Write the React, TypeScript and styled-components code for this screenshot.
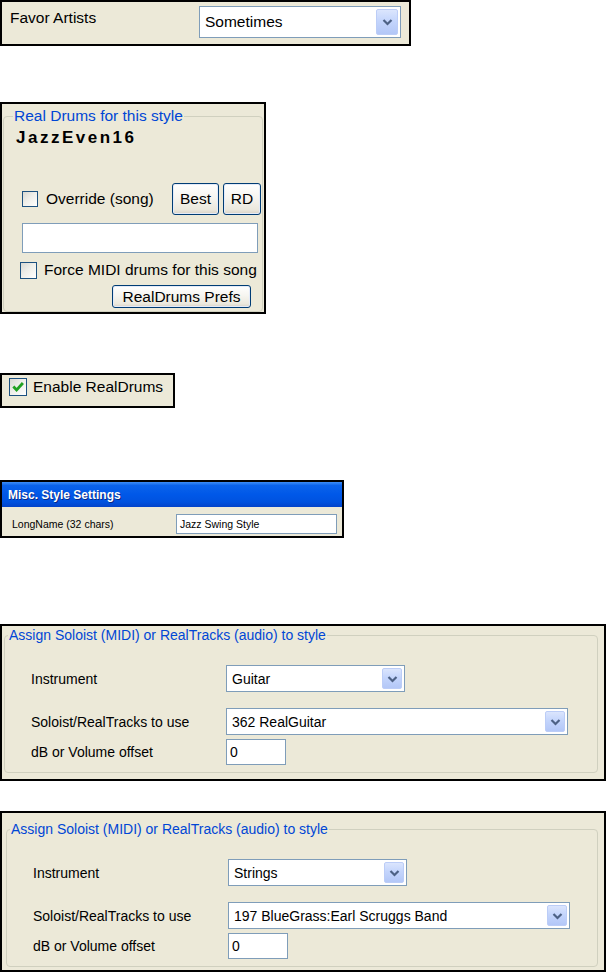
import React from 'react';
import styled, { createGlobalStyle } from 'styled-components';

const GlobalStyle = createGlobalStyle`
  body {
    margin: 0;
    background: #fff;
    font-family: "Liberation Sans", Arial, sans-serif;
    color: #000;
  }
`;

const Page = styled.div`
  display: flex;
  flex-direction: column;
  align-items: flex-start;
  width: 607px;
  height: 973px;
  overflow: hidden;
`;

const Panel = styled.div<{ $width: number; $top: number; $pad?: string }>`
  box-sizing: border-box;
  width: ${p => p.$width}px;
  margin-top: ${p => p.$top}px;
  border: 2px solid #000;
  background: #ece9d8;
  padding: ${p => p.$pad ?? '0'};
`;

const Row = styled.div<{ $mt?: number; $pl?: number; $align?: string }>`
  display: flex;
  align-items: ${p => p.$align ?? 'center'};
  margin-top: ${p => p.$mt ?? 0}px;
  padding-left: ${p => p.$pl ?? 0}px;
`;

const Label = styled.span<{ $size?: number; $w?: number; $mt?: number }>`
  font-size: ${p => p.$size ?? 15.5}px;
  line-height: 18px;
  white-space: nowrap;
  width: ${p => (p.$w ? `${p.$w}px` : 'auto')};
  flex-shrink: 0;
  margin-top: ${p => p.$mt ?? 0}px;
`;

/* combo box */
const Combo = styled.div<{ $w: number; $h: number }>`
  box-sizing: border-box;
  display: flex;
  align-items: center;
  width: ${p => p.$w}px;
  height: ${p => p.$h}px;
  padding: 2px;
  border: 1px solid #7f9db9;
  background: #fff;
`;

const ComboText = styled.span<{ $size: number }>`
  flex: 1;
  padding-left: 3px;
  font-size: ${p => p.$size}px;
  white-space: nowrap;
`;

const ComboButton = styled.span<{ $w: number }>`
  box-sizing: border-box;
  display: flex;
  align-items: center;
  justify-content: center;
  width: ${p => p.$w}px;
  align-self: stretch;
  border: 1px solid #bccdf7;
  border-radius: 2px;
  background: linear-gradient(180deg, #dbe5fd 0%, #c4d5fc 45%, #b3c7f7 100%);
`;

const Chevron = () => (
  <svg width="11" height="8" viewBox="0 0 11 8">
    <polyline points="1.5,2 5.5,6 9.5,2" fill="none" stroke="#4d6185" strokeWidth="2.2" />
  </svg>
);

const ComboBox = ({ w, h, size, btn, value }: { w: number; h: number; size: number; btn: number; value: string }) => (
  <Combo $w={w} $h={h}>
    <ComboText $size={size}>{value}</ComboText>
    <ComboButton $w={btn}>
      <Chevron />
    </ComboButton>
  </Combo>
);

const Field = styled.div<{ $w: number; $h: number; $size: number; $ml?: number; $mt?: number }>`
  box-sizing: border-box;
  width: ${p => p.$w}px;
  height: ${p => p.$h}px;
  margin-left: ${p => p.$ml ?? 0}px;
  margin-top: ${p => p.$mt ?? 0}px;
  padding: 0 3px;
  border: 1px solid #7f9db9;
  background: #fff;
  font-size: ${p => p.$size}px;
  line-height: ${p => p.$h - 2}px;
  white-space: nowrap;
`;

/* checkbox */
const Box = styled.span<{ $size: number; $ml?: number }>`
  box-sizing: border-box;
  display: inline-flex;
  align-items: center;
  justify-content: center;
  flex-shrink: 0;
  width: ${p => p.$size}px;
  height: ${p => p.$size}px;
  margin-left: ${p => p.$ml ?? 0}px;
  border: 1px solid #1c5180;
  background: linear-gradient(135deg, #d8d8d2 0%, #eeeee9 45%, #ffffff 100%);
`;

const CheckBox = ({ size, checked, ml }: { size: number; checked?: boolean; ml?: number }) => (
  <Box $size={size} $ml={ml}>
    {checked && (
      <svg width={size - 4} height={size - 4} viewBox="0 0 12 12">
        <path d="M2 5.6 L4.8 8.6 L10.2 2.6" fill="none" stroke="#21a121" strokeWidth="2.4" />
      </svg>
    )}
  </Box>
);

const CheckLabel = styled.span<{ $gap: number }>`
  margin-left: ${p => p.$gap}px;
  font-size: 15.5px;
  white-space: nowrap;
`;

/* push button */
const Button = styled.button<{ $w: number; $h: number; $ml?: number; $mt?: number }>`
  box-sizing: border-box;
  width: ${p => p.$w}px;
  height: ${p => p.$h}px;
  margin: ${p => p.$mt ?? 0}px 0 0 ${p => p.$ml ?? 0}px;
  padding: 0;
  border: 1px solid #003c74;
  border-radius: 3px;
  background: linear-gradient(180deg, #ffffff 0%, #f6f5f0 45%, #ebe8dd 85%, #d8d2c6 100%);
  box-shadow: inset 0 0 0 1px #e3eaf8;
  font-family: "Liberation Sans", Arial, sans-serif;
  font-size: 15.5px;
  color: #000;
  white-space: nowrap;
`;

/* group box */
const GroupBox = styled.fieldset<{ $pb: number; $pl?: number }>`
  margin: 0;
  padding: 0 0 ${p => p.$pb}px ${p => p.$pl ?? 0}px;
  border: 1px solid #d0d0bf;
  border-radius: 4px;
  min-width: 0;
`;

const Legend = styled.legend<{ $size: number; $ml: number }>`
  margin-left: ${p => p.$ml}px;
  padding: 0 1px;
  color: #0046d5;
  font-size: ${p => p.$size}px;
  line-height: 16px;
  white-space: nowrap;
`;

const StyleName = styled.div`
  margin: 4px 0 0 12px;
  font-size: 17px;
  font-weight: bold;
  letter-spacing: 2.5px;
  line-height: 20px;
`;

const Buttons = styled.div`
  display: flex;
  gap: 4px;
  margin-left: auto;
  margin-right: 1px;
`;

/* dialog title */
const TitleBar = styled.div`
  height: 25px;
  padding-left: 6px;
  display: flex;
  align-items: center;
  background: linear-gradient(180deg, #3d8ef7 0%, #0b63ea 14%, #0058e8 50%, #0052df 80%, #0343c9 100%);
  color: #fff;
  font-size: 12px;
  font-weight: bold;
  text-shadow: 1px 1px 0 #0b2a86;
`;

const TitleBody = styled.div`
  display: flex;
  align-items: center;
  height: 29px;
  box-sizing: border-box;
  padding: 5px 0 0 10px;
`;

const SoloistPanel = ({ top, pad, instrument, track }: { top: number; pad: string; instrument: string; track: string }) => (
  <Panel $width={606} $top={top} $pad={pad}>
    <GroupBox $pb={7}>
      <Legend $size={14} $ml={3}>Assign Soloist (MIDI) or RealTracks (audio) to style</Legend>
      <Row $mt={22} $pl={26}>
        <Label $size={14} $w={195}>Instrument</Label>
        <ComboBox w={179} h={27} size={14} btn={20} value={instrument} />
      </Row>
      <Row $mt={16} $pl={26}>
        <Label $size={14} $w={195}>Soloist/RealTracks to use</Label>
        <ComboBox w={342} h={27} size={14} btn={20} value={track} />
      </Row>
      <Row $mt={4} $pl={26}>
        <Label $size={14} $w={195}>dB or Volume offset</Label>
        <Field $w={60} $h={26} $size={14}>0</Field>
      </Row>
    </GroupBox>
  </Panel>
);

export default function App() {
  return (
    <Page>
      <GlobalStyle />

      <Panel $width={411} $top={0} $pad="4px 0 6px 8px">
        <Row $align="flex-start">
          <Label $w={189} $mt={3}>Favor Artists</Label>
          <ComboBox w={202} h={32} size={15.5} btn={22} value="Sometimes" />
        </Row>
      </Panel>

      <Panel $width={266} $top={56} $pad="4px 1px 0 1px">
        <GroupBox $pb={3}>
          <Legend $size={15.5} $ml={9}>Real Drums for this style</Legend>
          <StyleName>JazzEven16</StyleName>
          <Row $mt={35} $pl={18}>
            <CheckBox size={16} />
            <CheckLabel $gap={8}>Override (song)</CheckLabel>
            <Buttons>
              <Button $w={47} $h={32}>Best</Button>
              <Button $w={38} $h={32}>RD</Button>
            </Buttons>
          </Row>
          <Field $w={236} $h={30} $size={15.5} $ml={18} $mt={8} />
          <Row $mt={8} $pl={16}>
            <CheckBox size={17} />
            <CheckLabel $gap={7}>Force MIDI drums for this song</CheckLabel>
          </Row>
          <Button $w={139} $h={23} $ml={108} $mt={6}>RealDrums Prefs</Button>
        </GroupBox>
      </Panel>

      <Panel $width={175} $top={59} $pad="3px 0 10px 7px">
        <Row>
          <CheckBox size={18} checked />
          <CheckLabel $gap={6}>Enable RealDrums</CheckLabel>
        </Row>
      </Panel>

      <Panel $width={344} $top={72}>
        <TitleBar>Misc. Style Settings</TitleBar>
        <TitleBody>
          <Label $size={10.5} $w={164}>LongName (32 chars)</Label>
          <Field $w={161} $h={20} $size={10.5}>Jazz Swing Style</Field>
        </TitleBody>
      </Panel>

      <SoloistPanel top={86} pad="1px 6px 6px 2px" instrument="Guitar" track="362 RealGuitar" />
      <SoloistPanel top={30} pad="8px 6px 3px 4px" instrument="Strings" track="197 BlueGrass:Earl Scruggs Band" />
    </Page>
  );
}
